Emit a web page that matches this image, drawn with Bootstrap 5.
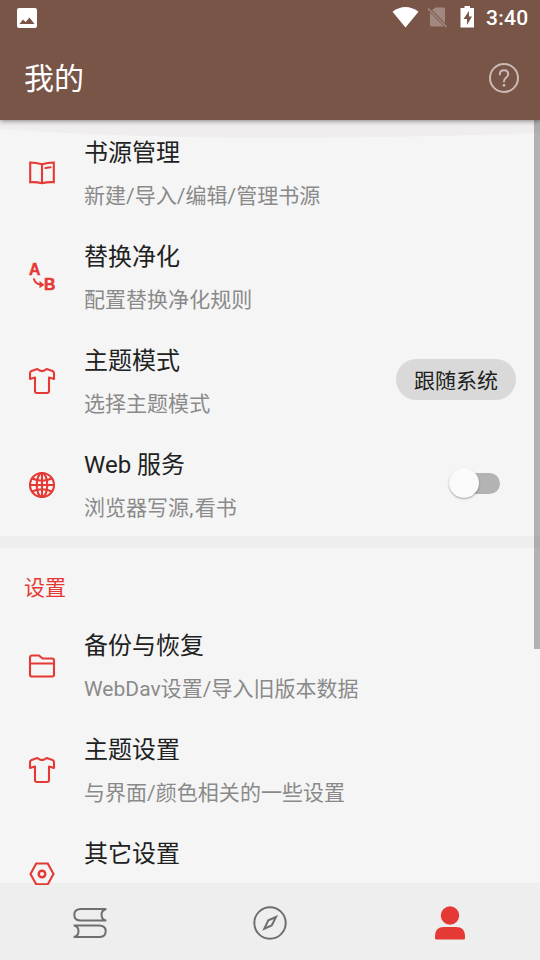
<!DOCTYPE html>
<html lang="zh-CN">
<head>
<meta charset="utf-8">
<meta name="viewport" content="width=device-width, initial-scale=1">
<title>我的</title>
<link rel="stylesheet" href="https://cdn.jsdelivr.net/npm/bootstrap@5.3.0/dist/css/bootstrap.min.css">
<style>
body{font-family:Roboto,"Noto Sans CJK SC",sans-serif;background:#f5f5f5;color:#212121}
svg{display:block;flex:none}
.screen{width:540px;height:960px}
.top-bar{height:120px;background:#795548;box-shadow:0 1px 5px rgba(0,0,0,.45);z-index:2}
.status{height:36px;padding:0 12px 0 17px}
.clock{font-size:21px;font-weight:500;line-height:38px;letter-spacing:.25px;width:46px}
.app-title{font-size:30px;line-height:36px;font-weight:400;padding-top:2px}
.title-row{height:84px;padding:0 20px 0 24px}
.glow{height:18px;top:0;left:0}
.list-pane{z-index:1}
.pref{height:104px;padding:0 24px 0 28px}
.pref-icon{width:28px;height:28px;margin:2px 28px 0 0;fill:none;stroke:#e53935;stroke-width:2.1;stroke-linejoin:round;stroke-linecap:round;overflow:visible}
.square-joins{stroke-linejoin:miter}
.pref-title{font-size:24px;line-height:36px;margin-top:2px}
.pref-note{font-size:21px;line-height:30px;margin-top:10px;color:#8a8a8a;letter-spacing:.03px;min-height:30px}
.comma{letter-spacing:1.5px}
.pill{width:120px;height:41px;font-size:21px;line-height:44px;background:#d9d9d9;margin-top:-1px}
.divider{height:12px;background:#eee}
.section-name{height:65px;padding:16px 24px 0;font-size:21px;color:#e53935}
.switch{width:52px;height:32px;margin:-2px 16px 0 0}
.track{width:42px;height:21px;background:#b3b3b3}
.thumb{width:30px;height:30px;left:1px;top:1px;background:#fafafa;box-shadow:0 1px 2px rgba(0,0,0,.35)}
.scroll-thumb{width:6px;height:529px;right:0;top:0;background:rgba(0,0,0,.27)}
.bottom-bar{height:77px;margin-top:-2px;background:#eee;z-index:0}
.bottom-bar svg{fill:none;stroke:#6f6f6f;stroke-width:2;margin-top:3px}
</style>
</head>
<body>
<svg width="0" height="0" class="position-absolute" aria-hidden="true">
  <symbol id="shirt" viewBox="0 0 28 28"><path d="M9.300 2Q14 6.200 18.700 2L24.500 4Q26 4.600 26 6.200V12L21 10.500V24Q21 26 19 26H9Q7 26 7 24V10.500L2 12V6.200Q2 4.600 3.500 4Z"/></symbol>
</svg>
<div class="screen d-flex flex-column overflow-hidden">
  <header class="top-bar position-relative text-white flex-shrink-0">
    <div class="status d-flex align-items-center">
      <svg width="20" height="20" viewBox="0 0 20 20"><path fill="#fff" fill-rule="evenodd" d="M2 0H18Q20 0 20 2V18Q20 20 18 20H2Q0 20 0 18V2Q0 0 2 0ZM2.500 16H17.500L12.500 9.500L8.700 14L6 11.500Z"/></svg>
      <svg class="ms-auto" width="83" height="24" viewBox="-1.500 0.500 83 24">
        <path fill="#fff" d="M0 6.200Q13 -3 26 6.200L13 22Z"/>
        <path fill="#a18980" d="M43 2H51Q52.500 2 52.500 3.500V17.500L39.500 4.500ZM37.500 7L51.500 21H39Q37.500 21 37.500 19.500Z"/>
        <path stroke="#a18980" stroke-width="1.700" d="M35.500 3L54 21.500"/>
        <path fill="#fff" fill-rule="evenodd" d="M72 .5H77.500V2.500H82V22H68V2.500H72ZM76.500 5.500L71 13.500H74.500V19.500L79.500 11H76.500Z"/>
      </svg>
      <span class="clock ms-2 ps-1 text-nowrap">3:40</span>
    </div>
    <div class="title-row d-flex align-items-center justify-content-between">
      <h1 class="app-title m-0">我的</h1>
      <svg width="32" height="32" viewBox="0 0 32 32" fill="none" stroke="#c9bbb5" stroke-width="2"><circle cx="16" cy="16" r="14"/><path stroke-linecap="round" d="M11.800 12.500Q11.800 8.300 16 8.300T20.200 12.300Q20.200 14 18 15.700T16 19.500"/><circle cx="16" cy="23.300" r="1.400" fill="#c9bbb5" stroke="none"/></svg>
    </div>
  </header>

  <main class="list-pane position-relative flex-fill overflow-hidden">
    <svg class="glow position-absolute" width="540" viewBox="0 0 540 18" preserveAspectRatio="none"><path fill="#efedee" d="M0 0H540V13Q390 18 245 18Q120 17 0 9Z"/></svg>
    <div class="position-relative">
      <section>
        <div class="pref d-flex align-items-center">
          <svg class="pref-icon square-joins" viewBox="0 0 28 28"><path d="M14 5.200Q8 3.500 2.200 3.500V23.300Q8 22.800 14 24.200Q20 22.800 25.800 23.300V3.500Q20 3.500 14 5.200ZM14 5.500V24M17.500 9L22.500 8.200"/></svg>
          <div class="flex-fill"><div class="pref-title">书源管理</div><div class="pref-note">新建/导入/编辑/管理书源</div></div>
        </div>
        <div class="pref d-flex align-items-center">
          <svg class="pref-icon" viewBox="0 0 28 28"><g fill="#e53935" stroke-width=".5" font-family="Liberation Sans, sans-serif" font-weight="700" font-size="15.800"><text x="1.100" y="12.300">A</text><text x="15.900" y="27">B</text></g><path d="M6 16.300Q7.500 21.300 13 21.600"/><path fill="#e53935" stroke="none" d="M11.500 18L16.500 21.700L11.500 25.200Z"/></svg>
          <div class="flex-fill"><div class="pref-title">替换净化</div><div class="pref-note">配置替换净化规则</div></div>
        </div>
        <div class="pref d-flex align-items-center">
          <svg class="pref-icon"><use href="#shirt"/></svg>
          <div class="flex-fill"><div class="pref-title">主题模式</div><div class="pref-note">选择主题模式</div></div>
          <span class="pill rounded-pill text-center">跟随系统</span>
        </div>
        <div class="pref d-flex align-items-center">
          <svg class="pref-icon" viewBox="0 0 28 28"><circle cx="14" cy="14" r="12"/><ellipse cx="14" cy="14" rx="5.300" ry="12"/><path d="M14 2V26M2 14H26M4.200 7.500Q14 12 23.800 7.500M4.200 20.500Q14 16 23.800 20.500"/></svg>
          <div class="flex-fill"><div class="pref-title">Web 服务</div><div class="pref-note">浏览器写源<span class="comma">,</span>看书</div></div>
          <div class="switch position-relative d-flex align-items-center justify-content-end" role="switch" aria-checked="false"><span class="track rounded-pill"></span><span class="thumb rounded-circle position-absolute"></span></div>
        </div>
      </section>
      <div class="divider"></div>
      <section>
        <div class="section-name d-flex align-items-center">设置</div>
        <div class="pref d-flex align-items-center">
          <svg class="pref-icon" viewBox="0 0 28 28"><path d="M4 3.500H11L14.500 6.500H24Q26 6.500 26 8.500V22.800Q26 24.500 24 24.500H4Q2 24.500 2 22.800V5.500Q2 3.500 4 3.500ZM2 11.500H26"/></svg>
          <div class="flex-fill"><div class="pref-title">备份与恢复</div><div class="pref-note">WebDav设置/导入旧版本数据</div></div>
        </div>
        <div class="pref d-flex align-items-center">
          <svg class="pref-icon"><use href="#shirt"/></svg>
          <div class="flex-fill"><div class="pref-title">主题设置</div><div class="pref-note">与界面/颜色相关的一些设置</div></div>
        </div>
        <div class="pref d-flex align-items-center">
          <svg class="pref-icon square-joins" viewBox="0 0 28 28"><path d="M8.200 3.500H19.800L25.500 14L19.800 24.300H8.200L2.500 14Z"/><circle cx="14" cy="14" r="3.300" stroke-width="2.400"/></svg>
          <div class="flex-fill"><div class="pref-title">其它设置</div><div class="pref-note"></div></div>
        </div>
      </section>
    </div>
    <div class="scroll-thumb position-absolute"></div>
  </main>

  <nav class="bottom-bar position-relative d-flex flex-shrink-0">
    <div class="col-4 d-flex align-items-center justify-content-center"><svg width="36" height="36" viewBox="0 0 36 36"><path stroke-linejoin="bevel" d="M34.300 4H8Q2.300 4.500 2.300 9.800T8 15.600H34.300Q29.500 14.500 29.500 9.800T34.300 4ZM1.700 20.400H28Q33.700 20.900 33.700 26.200T28 32H1.700Q6.500 30.900 6.500 26.200T1.700 20.400Z"/></svg></div>
    <div class="col-4 d-flex align-items-center justify-content-center"><svg width="36" height="36" viewBox="0 0 36 36"><circle cx="18" cy="18" r="15.700"/><path d="M24 12L16.300 15.300L12.300 23.700L19.700 20.500Z"/></svg></div>
    <div class="col-4 d-flex align-items-center justify-content-center"><svg width="36" height="36" viewBox="0 0 36 36"><g fill="#e53935" stroke="none"><circle cx="18" cy="10.500" r="9.200"/><path d="M3 33V31Q3 22 12 22H24Q33 22 33 31V33Q33 34.500 31.500 34.500H4.500Q3 34.500 3 33Z"/></g></svg></div>
  </nav>
</div>
<script src="https://cdn.jsdelivr.net/npm/bootstrap@5.3.0/dist/js/bootstrap.bundle.min.js"></script>
</body>
</html>
